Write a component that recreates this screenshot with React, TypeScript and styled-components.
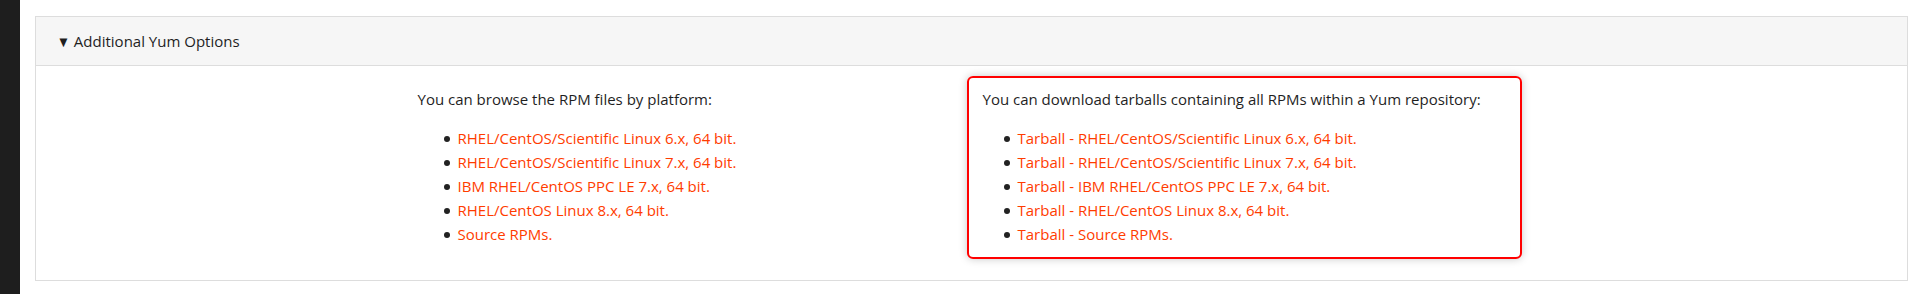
import styled, { createGlobalStyle } from 'styled-components';

const GlobalStyle = createGlobalStyle`
  html, body {
    margin: 0;
    padding: 0;
    background: #ffffff;
  }
  body {
    font-family: "Open Sans", "Noto Sans", sans-serif;
    font-size: 15px;
    line-height: 24px;
    color: #1f1f1f;
  }
`;

const Page = styled.div`
  display: flex;
  height: 294px;
`;

const SideStrip = styled.div`
  width: 20px;
  flex: none;
  background: #1e1e1e;
`;

const Main = styled.main`
  flex: 1;
  padding: 16px 14px 0 15px;
`;

const Panel = styled.section`
  border: 1px solid #dddddd;
  background: #fff;
`;

const PanelHeader = styled.div`
  background: #f6f6f6;
  border-bottom: 1px solid #dddddd;
  padding: 12px 20px;
  color: #1f1f1f;
  cursor: pointer;
`;

const Caret = styled.span`
  display: inline-block;
  font-size: 15px;
  margin-right: 3px;
  transform: scaleX(0.9);
`;

const PanelBody = styled.div`
  display: grid;
  grid-template-columns: 549px 555px;
  justify-content: center;
  align-items: start;
  padding: 10px 4px 21px 0;
`;

const Column = styled.div`
  padding-top: 11px;
`;

const Highlight = styled.div`
  border: 2px solid #ff0000;
  border-radius: 6px;
  padding: 9px 14px 11px 14px;
  box-shadow: 0 0 8px rgba(0, 0, 0, 0.22);
`;

const Intro = styled.p`
  margin: 0 0 15px;
`;

const LinkList = styled.ul<{ $indent: number }>`
  margin: 0;
  padding-left: ${p => p.$indent}px;
  list-style: none;
`;

const Item = styled.li`
  &::before {
    content: '';
    display: inline-block;
    width: 6px;
    height: 6px;
    border-radius: 50%;
    background: #222;
    margin-left: -14px;
    margin-right: 8px;
    vertical-align: 2px;
  }
`;

const Link = styled.a`
  color: #ff3c00;
  text-decoration: none;
`;

const platforms = [
  'RHEL/CentOS/Scientific Linux 6.x, 64 bit.',
  'RHEL/CentOS/Scientific Linux 7.x, 64 bit.',
  'IBM RHEL/CentOS PPC LE 7.x, 64 bit.',
  'RHEL/CentOS Linux 8.x, 64 bit.',
  'Source RPMs.',
];

export default function App() {
  return (
    <>
      <GlobalStyle />
      <Page>
        <SideStrip />
        <Main>
          <Panel>
            <PanelHeader>
              <Caret>▼</Caret>Additional Yum Options
            </PanelHeader>
            <PanelBody>
              <Column>
                <Intro>You can browse the RPM files by platform:</Intro>
                <LinkList $indent={40}>
                  {platforms.map(p => (
                    <Item key={p}><Link href="#">{p}</Link></Item>
                  ))}
                </LinkList>
              </Column>
              <Highlight>
                <Intro>You can download tarballs containing all RPMs within a Yum repository:</Intro>
                <LinkList $indent={35}>
                  {platforms.map(p => (
                    <Item key={p}><Link href="#">Tarball - {p}</Link></Item>
                  ))}
                </LinkList>
              </Highlight>
            </PanelBody>
          </Panel>
        </Main>
      </Page>
    </>
  );
}
